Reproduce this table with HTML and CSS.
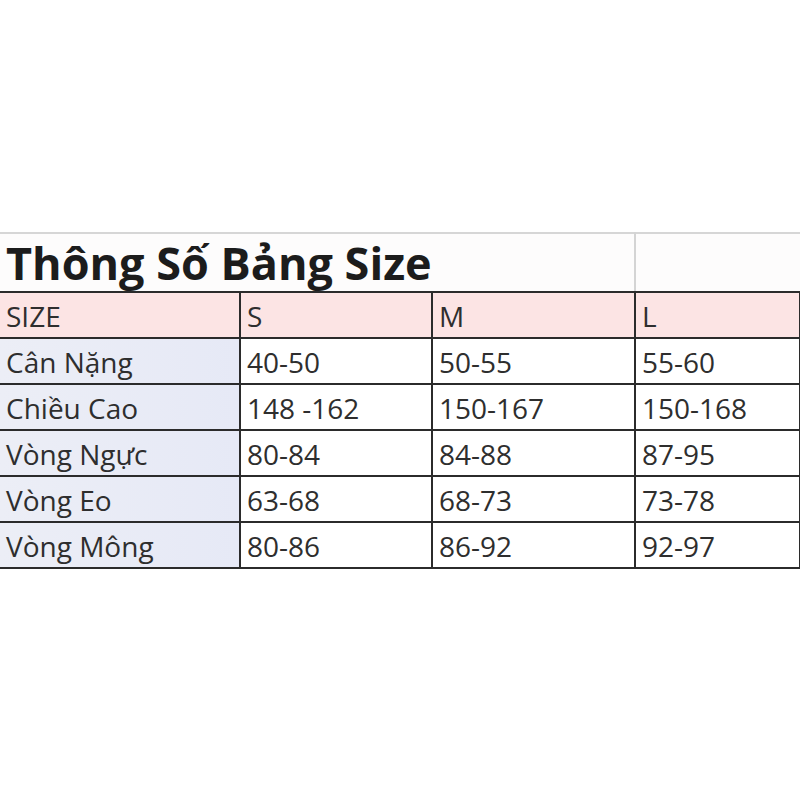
FILE: index.html
```html
<!DOCTYPE html>
<html lang="vi">
<head>
<meta charset="utf-8">
<link rel="stylesheet" href="styles.css">
</head>
<body>
<div class="page">
  <table class="chart">
    <colgroup>
      <col class="c1"><col class="c2"><col class="c3"><col class="c4">
    </colgroup>
    <tr class="title-row">
      <td colspan="3" class="title">Thông Số Bảng Size</td>
      <td class="blank"></td>
    </tr>
    <tr class="head-row">
      <td>SIZE</td><td>S</td><td>M</td><td>L</td>
    </tr>
    <tr><td class="label">Cân Nặng</td><td>40-50</td><td>50-55</td><td>55-60</td></tr>
    <tr><td class="label">Chiều Cao</td><td>148 -162</td><td>150-167</td><td>150-168</td></tr>
    <tr><td class="label">Vòng Ngực</td><td>80-84</td><td>84-88</td><td>87-95</td></tr>
    <tr><td class="label">Vòng Eo</td><td>63-68</td><td>68-73</td><td>73-78</td></tr>
    <tr><td class="label">Vòng Mông</td><td>80-86</td><td>86-92</td><td>92-97</td></tr>
  </table>
</div>
</body>
</html>
```

FILE: styles.css
```css
html, body {
  margin: 0;
  padding: 0;
  background: #ffffff;
}
.page {
  width: 800px;
  height: 800px;
  padding-top: 232px;
  box-sizing: border-box;
}
.chart {
  border-collapse: collapse;
  table-layout: fixed;
  width: 800px;
  font-family: "Open Sans", "Liberation Sans", sans-serif;
  color: #2e2e2e;
}
.c1 { width: 240px; }
.c2 { width: 192px; }
.c3 { width: 203px; }
.c4 { width: 165px; }
.chart td {
  border: 2px solid #2b2b2b;
  padding: 3px 0 0 6px;
  height: 41px;
  font-size: 28px;
  line-height: 41px;
  white-space: nowrap;
  overflow: hidden;
  vertical-align: middle;
}
.chart tr > td:first-child { border-left: none; }
.title-row td {
  height: 57px;
  padding: 0;
  border-top: 2px solid #d6d6d6;
  background: #fdfcfc;
}
.title-row .title {
  font-size: 45px;
  font-weight: 700;
  color: #1c1c1c;
  line-height: 57px;
  padding: 0 0 0 6px;
  border-right: 2px solid #d4d4d4;
}
.title-row .blank {
  border-left: 2px solid #d4d4d4;
  border-right: none;
}
.head-row td {
  background: #fce4e4;
}
.chart .label {
  background: linear-gradient(90deg, #eceef6 0%, #e6e9f6 100%);
}
```
